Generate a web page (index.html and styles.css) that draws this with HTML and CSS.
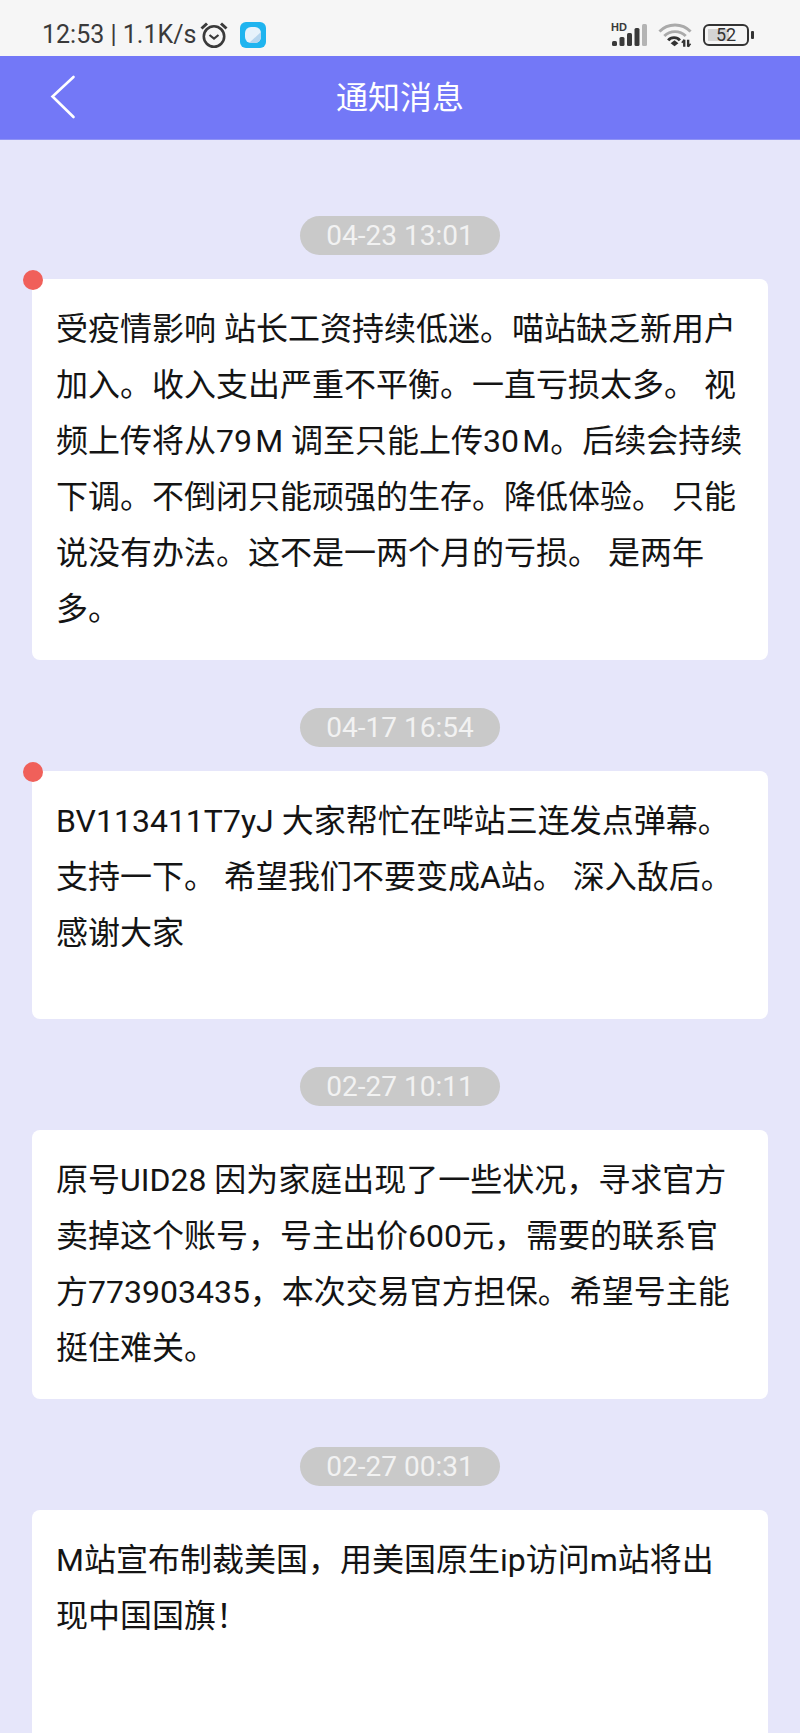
FILE: index.html
```html
<!DOCTYPE html>
<html lang="zh-CN">
<head>
  <meta charset="UTF-8">
  <meta name="viewport" content="width=device-width, initial-scale=1.0">
  <title>通知消息</title>
  <link rel="stylesheet" href="styles.css">
</head>
<body>
  <!-- Status bar -->
  <div class="statusbar">
    <div class="status-left">
      <span class="status-text">12:53 | 1.1K/s</span>
      <svg class="alarm" width="30" height="28" viewBox="0 0 30 28" fill="none" stroke="#3a3a3a">
        <circle cx="15" cy="15.5" r="10.2" stroke-width="2.6"/>
        <path d="M10.5 14l4.5 3.6 4.5-3.6" stroke-width="2.2"/>
        <path d="M2.5 7.5L8 2.5M27.5 7.5L22 2.5" stroke-width="3"/>
      </svg>
      <svg class="app-icon" width="26" height="26" viewBox="0 0 26 26">
        <rect width="26" height="26" rx="6" fill="#1fb4ef"/>
        <rect x="5" y="5" width="16" height="16" rx="6" fill="#e6f2fb"/>
        <path d="M9 21L21 10v5a6 6 0 0 1-6 6z" fill="#b5d5ee"/>
      </svg>
    </div>
    <div class="status-right">
      <svg width="37" height="25" viewBox="0 0 37 25">
        <text x="0" y="9" class="hd-label">HD</text>
        <rect x="1" y="19" width="5" height="5" rx="1.5" fill="#3a3a3a"/>
        <rect x="8.500" y="15" width="5" height="9" rx="1.500" fill="#3a3a3a"/>
        <rect x="16" y="11" width="5" height="13" rx="1.500" fill="#3a3a3a"/>
        <rect x="23.500" y="6" width="5" height="18" rx="1.500" fill="#3a3a3a"/>
        <rect x="31" y="2" width="5" height="22" rx="1.500" fill="#b4b4b4"/>
      </svg>
      <svg class="wifi" width="35" height="26" viewBox="0 0 36 26" fill="none">
        <path d="M1.5 9.5C10 .5 25 .5 33.5 9.5" stroke="#aaa" stroke-width="3"/>
        <path d="M6.5 14C12.500 8 22.500 8 28.500 14" stroke="#aaa" stroke-width="3"/>
        <path d="M10.500 18.500C13.500 14.800 19.500 14.800 22.500 18.500" stroke="#333" stroke-width="3"/>
        <path d="M13 21.500L17 18.500l4 3-4 3z" fill="#333"/>
        <path d="M27 18v7M31 18v7" stroke="#333" stroke-width="2.400"/>
        <path d="M24.500 21l2.500-3M33.500 22l-2.500 3" stroke="#333" stroke-width="1.600"/>
      </svg>
      <div class="battery">
        <div class="battery-body">
          <div class="battery-fill"></div>
          <span class="battery-num">52</span>
        </div>
        <div class="battery-tip"></div>
      </div>
    </div>
  </div>

  <!-- Header -->
  <div class="header">
    <svg class="back" width="26" height="44" viewBox="0 0 26 44" fill="none" stroke="#fff" stroke-width="2.600" stroke-linecap="round">
      <path d="M23.500 2L2.500 21.500 23.500 42"/>
    </svg>
    <span class="title">通知消息</span>
  </div>

  <!-- Messages -->
  <div class="list">
    <div class="item">
      <div class="time">04-23 13:01</div>
      <div class="card unread">受疫情影响 站长工资持续低迷。喵站缺乏新用户加入。收入支出严重不平衡。一直亏损太多。 视频上传将从79&#8202;M 调至只能上传30&#8202;M。后续会持续下调。不倒闭只能顽强的生存。降低体验。 只能说没有办法。这不是一两个月的亏损。 是两年多。</div>
    </div>
    <div class="item">
      <div class="time">04-17 16:54</div>
      <div class="card unread tall">BV113411T7yJ 大家帮忙在哔站三连发点弹幕。支持一下。 希望我们不要变成A站。 深入敌后。感谢大家</div>
    </div>
    <div class="item">
      <div class="time">02-27 10:11</div>
      <div class="card">原号UID28 因为家庭出现了一些状况，寻求官方卖掉这个账号，号主出价600元，需要的联系官方773903435，本次交易官方担保。希望号主能挺住难关。</div>
    </div>
    <div class="item">
      <div class="time">02-27 00:31</div>
      <div class="card tall">M站宣布制裁美国，用美国原生ip访问m站将出现中国国旗！</div>
    </div>
  </div>
</body>
</html>
```

FILE: styles.css
```css
html, body {
  height: 1733px;
  overflow: hidden;
}

body {
  margin: 0;
  background: #e6e6fa;
  font-family: Roboto, "Noto Sans CJK SC", sans-serif;
}

/* status bar */
.statusbar {
  box-sizing: border-box;
  height: 56px;
  background: #f6f6f6;
  display: flex;
  justify-content: space-between;
  align-items: center;
  padding: 13px 46px 0 42px;
}

.status-left, .status-right {
  display: flex;
  align-items: center;
}

.status-text {
  font-size: 25px;
  color: #3a3a3a;
}

.alarm {
  margin-left: 3px;
}

.app-icon {
  margin-left: 11px;
}

.status-right {
  gap: 10px;
}

.hd-label {
  font-family: "Liberation Sans", sans-serif;
  font-size: 11px;
  font-weight: bold;
  fill: #3a3a3a;
}

.battery {
  display: flex;
  align-items: center;
  gap: 2px;
}

.battery-body {
  position: relative;
  width: 42px;
  height: 18px;
  border: 2px solid #333;
  border-radius: 6px;
  text-align: center;
}

.battery-fill {
  position: absolute;
  left: 3px;
  top: 3px;
  bottom: 3px;
  width: 50%;
  background: #d4d4d4;
}

.battery-num {
  position: relative;
  font-size: 18px;
  line-height: 18px;
  display: block;
  color: #333;
}

.battery-tip {
  width: 3px;
  height: 8px;
  background: #333;
  border-radius: 1px;
}

/* header */
.header {
  position: relative;
  box-sizing: border-box;
  height: 84px;
  padding-bottom: 6px;
  background: #7378f7;
  border-bottom: 1px solid #8f93f5;
  display: flex;
  align-items: center;
  justify-content: center;
}

.back {
  position: absolute;
  left: 50px;
  top: 19px;
}

.title {
  font-size: 32px;
  color: #fff;
}

/* messages */
.list {
  padding: 76px 32px 0;
}

.item {
  margin-bottom: 48px;
  display: flex;
  flex-direction: column;
  align-items: center;
}

.time {
  width: 200px;
  height: 39px;
  line-height: 39px;
  border-radius: 20px;
  background: #c9c9c9;
  color: #f2f2f2;
  font-size: 28px;
  text-align: center;
}

.card {
  position: relative;
  box-sizing: border-box;
  width: 100%;
  margin-top: 24px;
  padding: 22px 23px 23px 24px;
  background: #fff;
  border-radius: 8px;
  font-size: 32px;
  line-height: 56px;
  color: #141414;
}

.card.tall {
  min-height: 248px;
}

.card.unread::before {
  content: "";
  position: absolute;
  left: -9px;
  top: -9px;
  width: 20px;
  height: 20px;
  border-radius: 50%;
  background: #f0605a;
}
```
